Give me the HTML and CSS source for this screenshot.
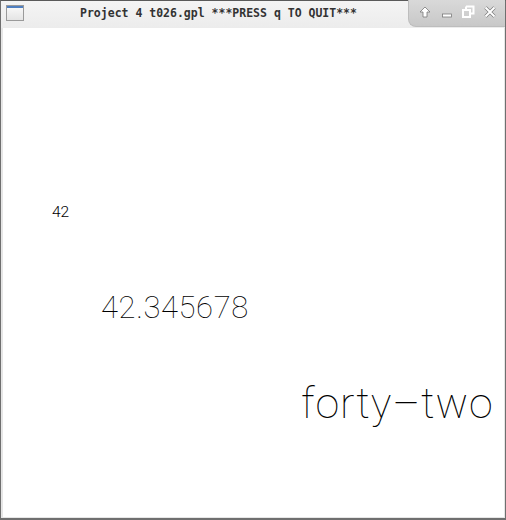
FILE: index.html
```html
<!DOCTYPE html>
<html>
<head>
<meta charset="utf-8">
<link rel="stylesheet" href="styles.css">
</head>
<body>
<div class="window">
  <div class="titlebar">
    <div class="app-icon"><div class="app-icon-bar"></div></div>
    <div class="title">Project 4 t026.gpl ***PRESS q TO QUIT***</div>
    <div class="buttons">
      <svg class="btn" width="14" height="14" viewBox="0 0 14 14">
        <path d="M7 2 L12 7 L9 7 L9 12 L5 12 L5 7 L2 7 Z" fill="#fff" stroke="#7a7a7a" stroke-width="0.8"/>
      </svg>
      <svg class="btn" width="14" height="14" viewBox="0 0 14 14">
        <rect x="2.5" y="9" width="9" height="3" fill="#fff" stroke="#7a7a7a" stroke-width="0.8"/>
      </svg>
      <svg class="btn" width="14" height="14" viewBox="0 0 14 14">
        <path d="M5 1.5 H12.5 V8.5 H10 M5 1.5 V4" fill="none" stroke="#fff" stroke-width="2"/>
        <rect x="2" y="5" width="7" height="7" fill="none" stroke="#fff" stroke-width="2"/>
      </svg>
      <svg class="btn" width="14" height="14" viewBox="0 0 14 14">
        <path d="M2.5 2.5 L11.5 11.5 M11.5 2.5 L2.5 11.5" stroke="#7a7a7a" stroke-width="3.2"/>
        <path d="M2.5 2.5 L11.5 11.5 M11.5 2.5 L2.5 11.5" stroke="#fff" stroke-width="2"/>
      </svg>
    </div>
  </div>
  <div class="content">
    <div class="canvas">
      <span class="label small">42</span>
      <span class="label medium">42.345678</span>
      <span class="label large">forty&#8211;two</span>
    </div>
  </div>
</div>
</body>
</html>
```
FILE: styles.css
```css
html, body {
  margin: 0;
  padding: 0;
  background: #ffffff;
}
.window {
  width: 506px;
  height: 520px;
  box-sizing: border-box;
  display: flex;
  flex-direction: column;
  border-left: 1px solid #6f6f6f;
  border-right: 1px solid #6f6f6f;
  border-bottom: 2px solid #6f6f6f;
  border-top: 1px solid #5a5a5a;
  background: #f0f0f0;
}
.titlebar {
  height: 27px;
  flex: none;
  display: flex;
  align-items: center;
  position: relative;
  background: linear-gradient(#f4f4f4, #ececec);
}
.app-icon {
  width: 18px;
  height: 16px;
  margin-left: 5px;
  margin-top: -3px;
  box-sizing: border-box;
  border: 1px solid #9a9a9a;
  background: linear-gradient(#fafafa, #e4e4e4);
}
.app-icon-bar {
  height: 2px;
  background: #4f7fc0;
}
.title {
  flex: 1;
  text-align: center;
  margin-left: 5px;
  margin-right: 0;
  margin-top: -3px;
  font-family: "DejaVu Sans Mono", monospace;
  font-weight: bold;
  font-size: 11.5px;
  color: #333333;
  white-space: nowrap;
}
.buttons {
  width: 97px;
  height: 27px;
  margin-top: -1px;
  align-self: flex-start;
  box-sizing: border-box;
  display: flex;
  align-items: center;
  justify-content: space-between;
  padding: 0 8px 0 9px;
  background: linear-gradient(#d9d9d9, #c8c8c8);
  border-bottom-left-radius: 8px;
  border-left: 1px solid #bdbdbd;
  border-bottom: 1px solid #bdbdbd;
}
.btn {
  display: block;
  margin-top: -2px;
}
.content {
  flex: 1;
  display: flex;
  padding: 0 1px 1px 2px;
  background: #e6e6e6;
}
.canvas {
  flex: 1;
  position: relative;
  background: #ffffff;
  font-family: Roboto, sans-serif;
  font-weight: 100;
  color: #000000;
}
.label {
  position: absolute;
  white-space: nowrap;
  line-height: 1;
}
.small {
  left: 49px;
  top: 177px;
  font-size: 15.5px;
  font-weight: 300;
  letter-spacing: 0px;
}
.medium {
  left: 98px;
  top: 264px;
  font-size: 31px;
  letter-spacing: 0.6px;
}
.large {
  left: 298px;
  top: 354px;
  font-size: 43px;
  letter-spacing: 0.9px;
}
```
